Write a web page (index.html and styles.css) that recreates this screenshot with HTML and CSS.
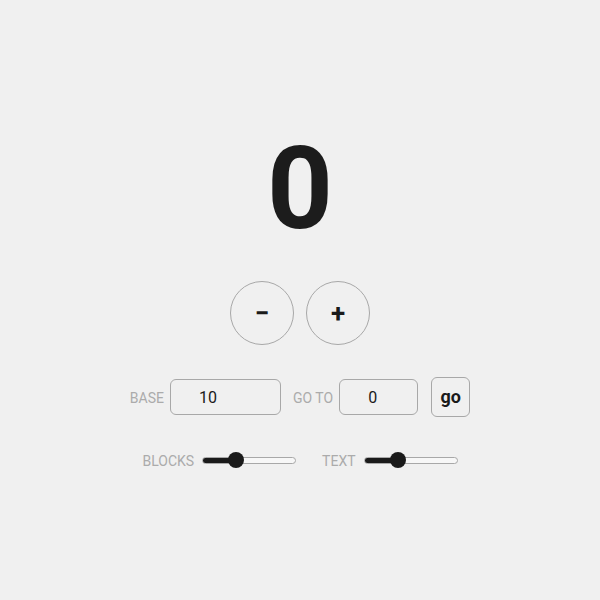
FILE: index.html
```html
<!DOCTYPE html>
<html lang="en">
<head>
<meta charset="utf-8">
<title>Counter</title>
<link rel="stylesheet" href="styles.css">
</head>
<body>
<main class="app">
  <div class="count">0</div>
  <div class="steps">
    <button class="step" type="button">&minus;</button>
    <button class="step" type="button">+</button>
  </div>
  <div class="controls">
    <label class="label" for="base">BASE</label>
    <input class="field field-base" id="base" type="text" value="10">
    <label class="label label-gap" for="goto">GO TO</label>
    <input class="field field-goto" id="goto" type="text" value="0">
    <button class="go" type="button">go</button>
  </div>
  <div class="sliders">
    <label class="label" for="blocks">BLOCKS</label>
    <input class="range" id="blocks" type="range" min="0" max="3" value="1" style="--fill: 36%">
    <label class="label label-wide" for="text">TEXT</label>
    <input class="range" id="text" type="range" min="0" max="3" value="1" style="--fill: 36%">
  </div>
</main>
</body>
</html>
```

FILE: styles.css
```css
* { box-sizing: border-box; }

html, body {
  margin: 0;
  background: #f0f0f0;
  font-family: Roboto, "Liberation Sans", sans-serif;
  color: #1a1a1a;
}

.app {
  display: flex;
  flex-direction: column;
  align-items: center;
  padding-top: 131px;
}

.count {
  font-size: 115px;
  line-height: 115px;
  font-weight: 700;
  color: #1c1c1c;
}

.steps {
  display: flex;
  gap: 12px;
  margin-top: 35px;
}

.step {
  width: 64px;
  height: 64px;
  border-radius: 50%;
  border: 1px solid #a8a8a8;
  background: transparent;
  font-family: Roboto, "Liberation Sans", sans-serif;
  font-size: 26px;
  font-weight: 700;
  color: #1a1a1a;
  padding: 0;
  display: flex;
  align-items: center;
  justify-content: center;
}

.controls {
  display: flex;
  align-items: center;
  margin-top: 32px;
}

.label {
  font-size: 14px;
  color: #ababab;
  margin-right: 6px;
  padding-top: 1px;
}

.label-gap { margin-left: 12px; }

.field {
  height: 36px;
  border: 1px solid #a8a8a8;
  border-radius: 6px;
  background: transparent;
  font-family: Roboto, "Liberation Sans", sans-serif;
  font-size: 16px;
  color: #1a1a1a;
  padding: 0 0 0 28px;
  outline: none;
}

.field-base { width: 111px; }
.field-goto { width: 79px; }

.go {
  margin-left: 13px;
  width: 39px;
  height: 40px;
  border: 1px solid #a8a8a8;
  border-radius: 6px;
  background: transparent;
  font-family: Roboto, "Liberation Sans", sans-serif;
  font-size: 18px;
  font-weight: 700;
  color: #1a1a1a;
  padding: 0 0 2px;
}

.sliders {
  display: flex;
  align-items: center;
  margin-top: 35px;
  height: 16px;
}

.sliders .label { margin-right: 8px; }
.label-wide { margin-left: 26px; }

.range {
  -webkit-appearance: none;
  appearance: none;
  width: 94px;
  height: 16px;
  margin: 0;
  background: transparent;
}

.range::-webkit-slider-runnable-track {
  height: 7px;
  border: 1px solid #a8a8a8;
  border-radius: 4px;
  background: linear-gradient(to right, #1a1a1a 0, #1a1a1a var(--fill), #f7f7f7 var(--fill));
}

.range::-webkit-slider-thumb {
  -webkit-appearance: none;
  width: 16px;
  height: 16px;
  border-radius: 50%;
  background: #1a1a1a;
  border: none;
  margin-top: -5.5px;
}
```
